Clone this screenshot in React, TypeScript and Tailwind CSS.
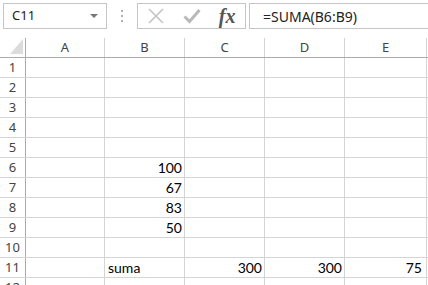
import React from 'react';

const cols = ['A', 'B', 'C', 'D', 'E'];
const colWidths = ['w-[79px]', 'w-[80px]', 'w-[80px]', 'w-[80px]', 'w-[82px]'];
const numPad = ['pr-[2px]', 'pr-[2px]', 'pr-[2px]', 'pr-[2px]', 'pr-[4px]'];

// valores por fila -> columna
const data: Record<number, Record<string, string>> = {
  6: { B: '100' },
  7: { B: '67' },
  8: { B: '83' },
  9: { B: '50' },
  11: { B: 'suma', C: '300', D: '300', E: '75' },
};

const isText = (v: string) => isNaN(Number(v));

const Toolbar: React.FC = () => (
  <div className="flex h-[38px] items-start pt-[3px] pl-[3px]">
    <div className="flex h-[26px] w-[104px] items-center justify-between border border-[#c6c6c6] bg-white pl-[8px] pr-[8px] text-[13px] text-[#222] [font-family:'Noto_Sans',sans-serif]">
      <span>C11</span>
      <svg width="8" height="5" viewBox="0 0 8 5">
        <path d="M0 0 L8 0 L4 4 Z" fill="#777" />
      </svg>
    </div>
    <div className="flex h-[26px] w-[30px] flex-col items-center justify-center gap-[3px]">
      <span className="block h-[2px] w-[2px] bg-[#b0b0b0]" />
      <span className="block h-[2px] w-[2px] bg-[#b0b0b0]" />
      <span className="block h-[2px] w-[2px] bg-[#b0b0b0]" />
    </div>
    <div className="flex h-[26px] w-[109px] items-center border border-[#c6c6c6] bg-white">
      <div className="flex w-[36px] justify-center">
        <svg width="16" height="16" viewBox="0 0 16 16">
          <path d="M1 1 L15 15 M15 1 L1 15" stroke="#c4c4c4" strokeWidth="1.6" />
        </svg>
      </div>
      <div className="flex w-[36px] justify-center">
        <svg width="18" height="16" viewBox="0 0 18 16">
          <path d="M1.5 8.5 L6.5 13.5 L16.5 2" stroke="#b9b9b9" strokeWidth="3" fill="none" />
        </svg>
      </div>
      <div className="flex w-[36px] justify-center text-[20px] font-semibold italic text-[#555] [font-family:'Liberation_Serif',serif] leading-none">
        fx
      </div>
    </div>
    <div className="ml-[3px] flex h-[26px] flex-1 items-center border border-[#c6c6c6] border-r-0 bg-white pl-[13px] text-[14px] text-[#222] [font-family:'Noto_Sans',sans-serif]">
      =SUMA(B6:B9)
    </div>
  </div>
);

export default function App() {
  const rows = Array.from({ length: 12 }, (_, i) => i + 1);

  return (
    <div className="h-[285px] w-[428px] overflow-hidden bg-white">
      <Toolbar />

      {/* encabezado de columnas */}
      <div className="flex h-[20px] border-b border-[#ababab]">
        <div className="relative w-[26px] shrink-0 border-r border-[#ababab]">
          <svg className="absolute right-[2px] bottom-[3px]" width="13" height="15" viewBox="0 0 13 15">
            <path d="M13 0 L13 15 L0 15 Z" fill="#dcdcdc" />
          </svg>
        </div>
        {cols.map((c, i) => (
          <div
            key={c}
            className={`${colWidths[i]} flex shrink-0 items-center justify-center border-r border-[#d4d4d4] text-[13px] text-[#444] [font-family:'Noto_Sans',sans-serif]`}
          >
            {c}
          </div>
        ))}
        <div className="flex-1" />
      </div>

      {rows.map((r) => (
        <div key={r} className="flex h-[20px] border-b border-[#d4d4d4]">
          <div className="flex w-[26px] shrink-0 items-center justify-center border-r border-[#ababab] text-[13px] text-[#444] [font-family:'Noto_Sans',sans-serif]">
            {r}
          </div>
          {cols.map((c, i) => {
            const v = data[r]?.[c] ?? '';
            return (
              <div
                key={c}
                className={`${colWidths[i]} flex shrink-0 items-end border-r border-[#d4d4d4] pb-[1px] text-[14px] leading-[17px] text-black [font-family:Lato,sans-serif] ${
                  isText(v) ? 'justify-start pl-[3px]' : `justify-end ${numPad[i]}`
                }`}
              >
                {v}
              </div>
            );
          })}
          <div className="flex-1" />
        </div>
      ))}
    </div>
  );
}
